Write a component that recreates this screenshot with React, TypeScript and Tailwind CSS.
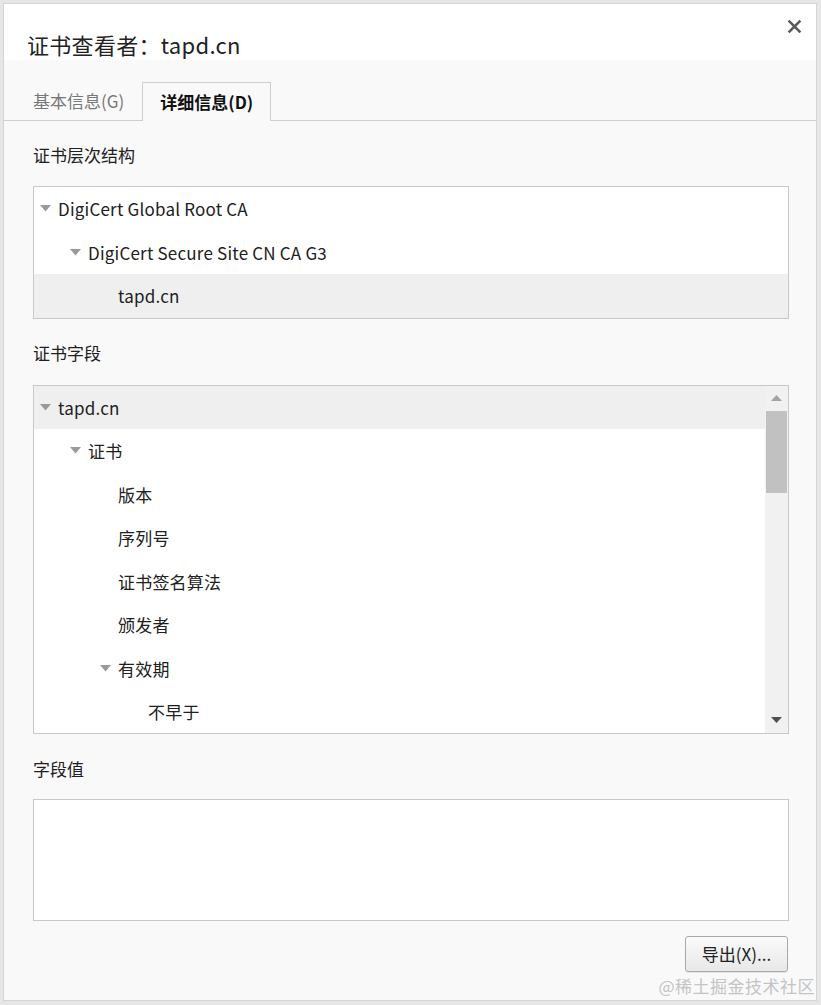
import type { ReactNode } from 'react';

const FONT = '"Noto Sans CJK SC", "Noto Sans", sans-serif';

type Row = { label: string; level: number; open?: boolean; selected?: boolean };

const chain: Row[] = [
  { label: 'DigiCert Global Root CA', level: 0, open: true },
  { label: 'DigiCert Secure Site CN CA G3', level: 1, open: true },
  { label: 'tapd.cn', level: 2, selected: true },
];

const fields: Row[] = [
  { label: 'tapd.cn', level: 0, open: true, selected: true },
  { label: '证书', level: 1, open: true },
  { label: '版本', level: 2 },
  { label: '序列号', level: 2 },
  { label: '证书签名算法', level: 2 },
  { label: '颁发者', level: 2 },
  { label: '有效期', level: 2, open: true },
  { label: '不早于', level: 3 },
];

function Caret() {
  return (
    <svg width="11" height="7" viewBox="0 0 11 7" className="shrink-0">
      <path d="M0 0 H11 L5.5 6.5 Z" fill="#9a9a9a" />
    </svg>
  );
}

function TreeRow({ row }: { row: Row }) {
  return (
    <div
      className={`flex h-[43.5px] items-center text-[17px] text-[#202020] ${row.selected ? 'bg-[#efefef]' : ''}`}
      style={{ paddingLeft: 6 + row.level * 30 }}
    >
      <span className="flex w-[18px] items-center">{row.open ? <Caret /> : null}</span>
      <span className="leading-none tracking-[0.2px]">{row.label}</span>
    </div>
  );
}

function Label({ children, className }: { children: ReactNode; className?: string }) {
  return <div className={`text-[17px] leading-[24px] text-[#202020] ${className ?? ''}`}>{children}</div>;
}

export default function App() {
  return (
    <div className="min-h-[1005px] bg-[#e6e6e6] pt-[3px] pl-[3px] pr-[4px] pb-[4px]" style={{ fontFamily: FONT }}>
      <div className="flex h-[998px] flex-col border border-[#d4d4d4] bg-[#f9f9f9]">
        {/* header */}
        <div className="flex h-[56px] items-end justify-between bg-white pl-[23px] pr-[14px]">
          <h1 className="pb-[1px] text-[22px] leading-[30px] tracking-[0.3px] text-[#222]">证书查看者：tapd.cn</h1>
          <button className="mb-[26px] text-[#555]" aria-label="close">
            <svg width="15" height="15" viewBox="0 0 14 14">
              <path d="M1.5 1.5 L12.5 12.5 M12.5 1.5 L1.5 12.5" stroke="#5a5a5a" strokeWidth="2.4" />
            </svg>
          </button>
        </div>

        {/* tabs */}
        <div className="mt-[22px] flex h-[39px] items-end border-b border-[#cfcfcf] pl-[17px]">
          <div className="flex h-[38px] items-center pl-[12px] pr-[18px] text-[17px] text-[#777]">基本信息(G)</div>
          <div className="-mb-px flex h-[39px] items-center border border-b-0 border-[#cfcfcf] bg-[#f9f9f9] px-[17px] text-[17px] font-bold text-[#111]">
            详细信息(D)
          </div>
        </div>

        <div className="flex flex-1 flex-col pl-[29px] pr-[27px]">
          <Label className="mt-[22px]">证书层次结构</Label>
          <div className="mt-[19px] border border-[#c8c8c8] bg-white">
            {chain.map((r) => (
              <TreeRow key={r.label} row={r} />
            ))}
          </div>

          <Label className="mt-[22px]">证书字段</Label>
          <div className="mt-[20px] flex h-[349px] border border-[#c8c8c8] bg-white">
            <div className="flex-1 overflow-hidden">
              {fields.map((r) => (
                <TreeRow key={r.label} row={r} />
              ))}
            </div>
            <div className="flex w-[23px] flex-col items-center bg-[#f1f1f1]">
              <div className="flex h-[25px] items-center">
                <svg width="11" height="6" viewBox="0 0 11 6">
                  <path d="M0 6 H11 L5.5 0 Z" fill="#a3a3a3" />
                </svg>
              </div>
              <div className="h-[82px] w-[21px] bg-[#c1c1c1]" />
              <div className="flex-1" />
              <div className="flex h-[26px] items-center">
                <svg width="11" height="6" viewBox="0 0 11 6">
                  <path d="M0 0 H11 L5.5 6 Z" fill="#505050" />
                </svg>
              </div>
            </div>
          </div>

          <Label className="mt-[23px]">字段值</Label>
          <div className="mt-[18px] h-[122px] border border-[#c8c8c8] bg-white" />

          <div className="mt-[15px] flex justify-end">
            <button className="mr-[1px] h-[36px] w-[103px] rounded-[3px] border border-[#a9a9a9] bg-gradient-to-b from-[#fafafa] to-[#e8e8e8] text-[17px] text-[#222] shadow-[0_1px_1px_rgba(0,0,0,0.08)]">
              导出(X)...
            </button>
          </div>
          <div className="mt-auto -mr-[26px] mb-[2px] self-end text-[17px] leading-[24px] tracking-[0.5px] text-[#c4c4c4]">@稀土掘金技术社区</div>
        </div>
      </div>
    </div>
  );
}
